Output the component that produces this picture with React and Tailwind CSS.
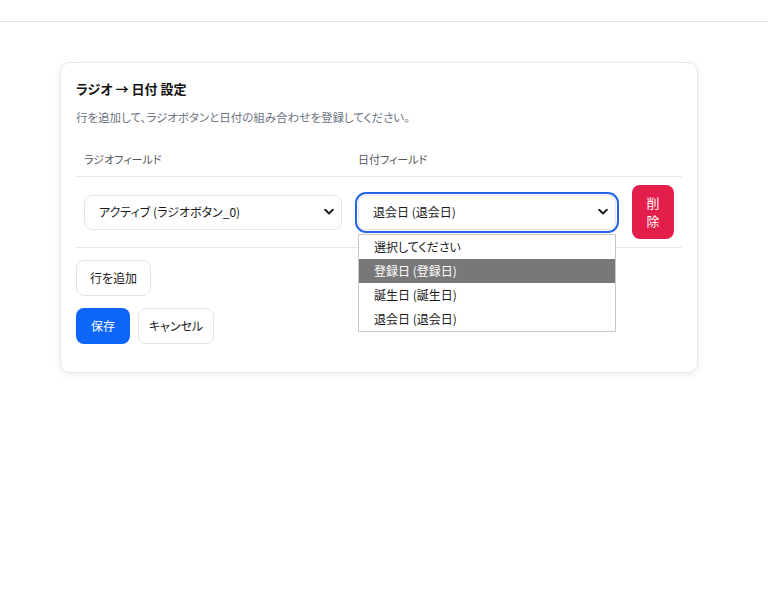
import React from "react";

const font = { fontFamily: '"Noto Sans CJK JP", "Noto Sans", sans-serif' };

function Chevron() {
  return (
    <svg
      className="pointer-events-none absolute right-[8px] top-1/2 -translate-y-1/2"
      width="10"
      height="7"
      viewBox="0 0 10 7"
      fill="none"
    >
      <path d="M1.2 1.3 L5 5 L8.8 1.3" stroke="#1f1f1f" strokeWidth="2" strokeLinecap="round" strokeLinejoin="round" />
    </svg>
  );
}

function Select({ value, focused, children }) {
  return (
    <div className="relative w-[258px]">
      <select
        defaultValue={value}
        className={
          "h-[35px] w-full appearance-none rounded-[8px] border border-[#e3e5e8] bg-white pl-[14px] pr-6 text-[12px] text-[#1a1a1a] [font-feature-settings:'palt'] " +
          (focused ? "outline-2 outline-offset-[1px] outline-solid outline-[#2563eb]" : "outline-none")
        }
        style={font}
      >
        {children}
      </select>
      <Chevron />
    </div>
  );
}

const dateOptions = [
  { v: "", label: "選択してください" },
  { v: "reg", label: "登録日 (登録日)" },
  { v: "birth", label: "誕生日 (誕生日)" },
  { v: "quit", label: "退会日 (退会日)" },
];

export default function App() {
  return (
    <div className="min-h-[591px] bg-white [font-feature-settings:'palt']" style={font}>
      <div className="h-[22px] border-b border-[#e0e0e0]" />

      <div className="ml-[60px] mt-[40px] w-[638px] rounded-[10px] border border-[#e5e7eb] bg-white px-[15px] pt-[16px] pb-[28px] shadow-[0_2px_8px_rgba(0,0,0,0.07)]">
        <h2 className="text-[13px] font-bold leading-[20px] text-[#111]">ラジオ → 日付 設定</h2>
        <p className="mt-[9px] text-[11.5px] leading-[18px] text-[#6b7280]">
          行を追加して、ラジオボタンと日付の組み合わせを登録してください。
        </p>

        <table className="mt-[17px] w-[606px] border-collapse">
          <thead>
            <tr className="border-b border-[#e5e7eb]">
              <th className="w-[274px] px-2 py-2 text-left text-[11px] font-normal leading-[17px] text-[#555]">
                ラジオフィールド
              </th>
              <th className="w-[274px] px-2 py-2 text-left text-[11px] font-normal leading-[17px] text-[#555]">
                日付フィールド
              </th>
              <th className="w-[58px]" />
            </tr>
          </thead>
          <tbody>
            <tr className="border-b border-[#e5e7eb]">
              <td className="px-2 py-2 align-middle">
                <Select value="active">
                  <option value="">選択してください</option>
                  <option value="active">アクティブ (ラジオボタン_0)</option>
                </Select>
              </td>
              <td className="relative px-2 py-2 align-middle">
                <Select value="quit" focused>
                  {dateOptions.map((o) => (
                    <option key={o.v} value={o.v}>
                      {o.label}
                    </option>
                  ))}
                </Select>
                <ul className="absolute left-2 top-[57px] z-10 w-[258px] border border-[#c8c8c8] bg-white text-[12px] text-[#1a1a1a]">
                  {dateOptions.map((o) => (
                    <li
                      key={o.v}
                      className={
                        "h-[24px] pl-[15px] leading-[24px] " +
                        (o.v === "reg" ? "bg-[#787878] text-white" : "")
                      }
                    >
                      {o.label}
                    </li>
                  ))}
                </ul>
              </td>
              <td className="px-2 py-2 align-middle">
                <button className="h-[54px] w-[42px] rounded-[8px] bg-[#e31e4b] px-[14px] text-[13px] leading-[18px] text-white">
                  削除
                </button>
              </td>
            </tr>
          </tbody>
        </table>

        <div className="mt-[12px]">
          <button className="h-[36px] w-[75px] rounded-[8px] border border-[#e3e5e8] bg-white text-[12px] text-[#1a1a1a]">
            行を追加
          </button>
        </div>
        <div className="mt-[12px] flex gap-2">
          <button className="h-[36px] w-[54px] rounded-[8px] bg-[#0d66f8] text-[12px] text-white">保存</button>
          <button className="h-[36px] w-[76px] rounded-[8px] border border-[#e3e5e8] bg-white text-[12px] text-[#1a1a1a]">
            キャンセル
          </button>
        </div>
      </div>
    </div>
  );
}
